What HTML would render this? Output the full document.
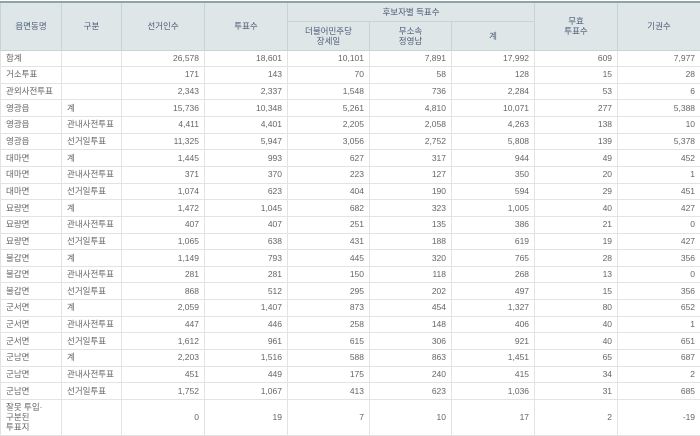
<!DOCTYPE html>
<html><head><meta charset="utf-8"><style>
html,body{margin:0;padding:0;background:#fff;width:700px;height:435px;overflow:hidden}
table{position:absolute;left:0;top:1px;border-collapse:collapse;table-layout:fixed;width:700px;font-family:"Liberation Sans","Noto Sans CJK KR",sans-serif;font-size:8.5px;color:#666}
th{background:#dee6e7;color:#4d5c78;font-weight:normal;border:1px solid #c9d3d4;line-height:10px;padding:0;overflow:hidden}
thead tr:first-child th{border-top:2px solid #8ea5a8}
tbody tr{height:16.65px}
td{border:1px solid #e3e3e3;padding:0 5px;white-space:nowrap;line-height:9px;overflow:hidden}
td.n{text-align:right}
tbody tr.last{height:36px}
tr.last td{line-height:10px}
</style></head><body>
<table>
<colgroup><col style="width:61px"><col style="width:60px"><col style="width:83px"><col style="width:83px"><col style="width:82px"><col style="width:82px"><col style="width:83px"><col style="width:83px"><col style="width:83px"></colgroup>
<thead>
<tr style="height:19px"><th rowspan="2">읍면동명</th><th rowspan="2">구분</th><th rowspan="2">선거인수</th><th rowspan="2">투표수</th><th colspan="3">후보자별 득표수</th><th rowspan="2">무효<br>투표수</th><th rowspan="2">기권수</th></tr>
<tr style="height:29px"><th>더불어민주당<br>장세일</th><th>무소속<br>정영남</th><th>계</th></tr>
</thead>
<tbody>
<tr><td>합계</td><td></td><td class="n">26,578</td><td class="n">18,601</td><td class="n">10,101</td><td class="n">7,891</td><td class="n">17,992</td><td class="n">609</td><td class="n">7,977</td></tr>
<tr><td>거소투표</td><td></td><td class="n">171</td><td class="n">143</td><td class="n">70</td><td class="n">58</td><td class="n">128</td><td class="n">15</td><td class="n">28</td></tr>
<tr><td>관외사전투표</td><td></td><td class="n">2,343</td><td class="n">2,337</td><td class="n">1,548</td><td class="n">736</td><td class="n">2,284</td><td class="n">53</td><td class="n">6</td></tr>
<tr><td>영광읍</td><td>계</td><td class="n">15,736</td><td class="n">10,348</td><td class="n">5,261</td><td class="n">4,810</td><td class="n">10,071</td><td class="n">277</td><td class="n">5,388</td></tr>
<tr><td>영광읍</td><td>관내사전투표</td><td class="n">4,411</td><td class="n">4,401</td><td class="n">2,205</td><td class="n">2,058</td><td class="n">4,263</td><td class="n">138</td><td class="n">10</td></tr>
<tr><td>영광읍</td><td>선거일투표</td><td class="n">11,325</td><td class="n">5,947</td><td class="n">3,056</td><td class="n">2,752</td><td class="n">5,808</td><td class="n">139</td><td class="n">5,378</td></tr>
<tr><td>대마면</td><td>계</td><td class="n">1,445</td><td class="n">993</td><td class="n">627</td><td class="n">317</td><td class="n">944</td><td class="n">49</td><td class="n">452</td></tr>
<tr><td>대마면</td><td>관내사전투표</td><td class="n">371</td><td class="n">370</td><td class="n">223</td><td class="n">127</td><td class="n">350</td><td class="n">20</td><td class="n">1</td></tr>
<tr><td>대마면</td><td>선거일투표</td><td class="n">1,074</td><td class="n">623</td><td class="n">404</td><td class="n">190</td><td class="n">594</td><td class="n">29</td><td class="n">451</td></tr>
<tr><td>묘량면</td><td>계</td><td class="n">1,472</td><td class="n">1,045</td><td class="n">682</td><td class="n">323</td><td class="n">1,005</td><td class="n">40</td><td class="n">427</td></tr>
<tr><td>묘량면</td><td>관내사전투표</td><td class="n">407</td><td class="n">407</td><td class="n">251</td><td class="n">135</td><td class="n">386</td><td class="n">21</td><td class="n">0</td></tr>
<tr><td>묘량면</td><td>선거일투표</td><td class="n">1,065</td><td class="n">638</td><td class="n">431</td><td class="n">188</td><td class="n">619</td><td class="n">19</td><td class="n">427</td></tr>
<tr><td>불갑면</td><td>계</td><td class="n">1,149</td><td class="n">793</td><td class="n">445</td><td class="n">320</td><td class="n">765</td><td class="n">28</td><td class="n">356</td></tr>
<tr><td>불갑면</td><td>관내사전투표</td><td class="n">281</td><td class="n">281</td><td class="n">150</td><td class="n">118</td><td class="n">268</td><td class="n">13</td><td class="n">0</td></tr>
<tr><td>불갑면</td><td>선거일투표</td><td class="n">868</td><td class="n">512</td><td class="n">295</td><td class="n">202</td><td class="n">497</td><td class="n">15</td><td class="n">356</td></tr>
<tr><td>군서면</td><td>계</td><td class="n">2,059</td><td class="n">1,407</td><td class="n">873</td><td class="n">454</td><td class="n">1,327</td><td class="n">80</td><td class="n">652</td></tr>
<tr><td>군서면</td><td>관내사전투표</td><td class="n">447</td><td class="n">446</td><td class="n">258</td><td class="n">148</td><td class="n">406</td><td class="n">40</td><td class="n">1</td></tr>
<tr><td>군서면</td><td>선거일투표</td><td class="n">1,612</td><td class="n">961</td><td class="n">615</td><td class="n">306</td><td class="n">921</td><td class="n">40</td><td class="n">651</td></tr>
<tr><td>군남면</td><td>계</td><td class="n">2,203</td><td class="n">1,516</td><td class="n">588</td><td class="n">863</td><td class="n">1,451</td><td class="n">65</td><td class="n">687</td></tr>
<tr><td>군남면</td><td>관내사전투표</td><td class="n">451</td><td class="n">449</td><td class="n">175</td><td class="n">240</td><td class="n">415</td><td class="n">34</td><td class="n">2</td></tr>
<tr><td>군남면</td><td>선거일투표</td><td class="n">1,752</td><td class="n">1,067</td><td class="n">413</td><td class="n">623</td><td class="n">1,036</td><td class="n">31</td><td class="n">685</td></tr>
<tr class="last"><td style="white-space:normal">잘못 투입·<br>구분된<br>투표지</td><td></td><td class="n">0</td><td class="n">19</td><td class="n">7</td><td class="n">10</td><td class="n">17</td><td class="n">2</td><td class="n">-19</td></tr>
</tbody>
</table>
</body></html>
